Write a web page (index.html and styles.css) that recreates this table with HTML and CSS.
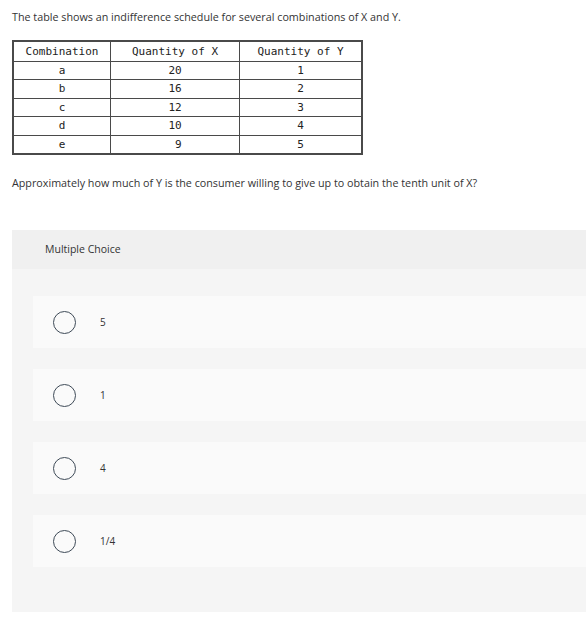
FILE: index.html
```html
<!DOCTYPE html>
<html>
<head>
<meta charset="utf-8">
<link rel="stylesheet" href="styles.css">
</head>
<body>
<p class="intro">The table shows an indifference schedule for several combinations of X and Y.</p>
<table class="sched">
  <tr><th>Combination</th><th>Quantity of X</th><th>Quantity of Y</th></tr>
  <tr><td>a</td><td>20</td><td>1</td></tr>
  <tr><td>b</td><td>16</td><td>2</td></tr>
  <tr><td>c</td><td>12</td><td>3</td></tr>
  <tr><td>d</td><td>10</td><td>4</td></tr>
  <tr><td>e</td><td>&nbsp;9</td><td>5</td></tr>
</table>
<p class="question">Approximately how much of Y is the consumer willing to give up to obtain the tenth unit of X?</p>
<section class="panel">
  <div class="panel-head">Multiple Choice</div>
  <div class="options">
    <div class="option"><span class="radio"></span><span class="label">5</span></div>
    <div class="option"><span class="radio"></span><span class="label">1</span></div>
    <div class="option"><span class="radio"></span><span class="label">4</span></div>
    <div class="option"><span class="radio"></span><span class="label">1/4</span></div>
  </div>
</section>
</body>
</html>
```
FILE: styles.css
```css
html, body {
  margin: 0;
  padding: 0;
  background: #fff;
}
body {
  padding-left: 12px;
  font-family: "Open Sans", "Liberation Sans", sans-serif;
  color: #333;
  width: 574px;
  overflow: hidden;
}
.intro {
  margin: 0;
  padding-top: 10px;
  font-size: 10.75px;
  line-height: 15px;
  height: 30px;
}
.sched {
  border-collapse: collapse;
  border: 2px solid #4a4a4a;
  font-family: "DejaVu Sans Mono", "Liberation Mono", monospace;
  font-size: 11px;
  color: #222;
  table-layout: fixed;
  width: 351px;
}
.sched th, .sched td {
  border: 1px solid #4a4a4a;
  font-weight: normal;
  text-align: center;
  height: 17.5px;
  padding: 0;
  line-height: 17px;
}
.sched th { height: 18.5px; }
.sched th:nth-child(1) { width: 96px; }
.sched th:nth-child(2) { width: 128px; }
.question {
  margin: 0;
  padding-top: 21px;
  font-size: 10.75px;
  line-height: 15px;
  height: 54px;
}
.panel {
  background: #f5f5f5;
  padding-bottom: 45px;
}
.panel-head {
  background: #f0f0f0;
  height: 39px;
  line-height: 39px;
  padding-left: 33px;
  font-size: 10.5px;
  color: #333;
}
.options {
  display: flex;
  flex-direction: column;
  gap: 21px;
  padding: 27px 0 0 21px;
}
.option {
  display: flex;
  align-items: center;
  height: 52px;
  background: #fafafa;
  padding-left: 20px;
}
.radio {
  width: 21px;
  height: 21px;
  border: 1.2px solid #3e4a57;
  border-radius: 50%;
  flex: none;
}
.label {
  margin-left: 24px;
  font-size: 10px;
  color: #333;
}
```
